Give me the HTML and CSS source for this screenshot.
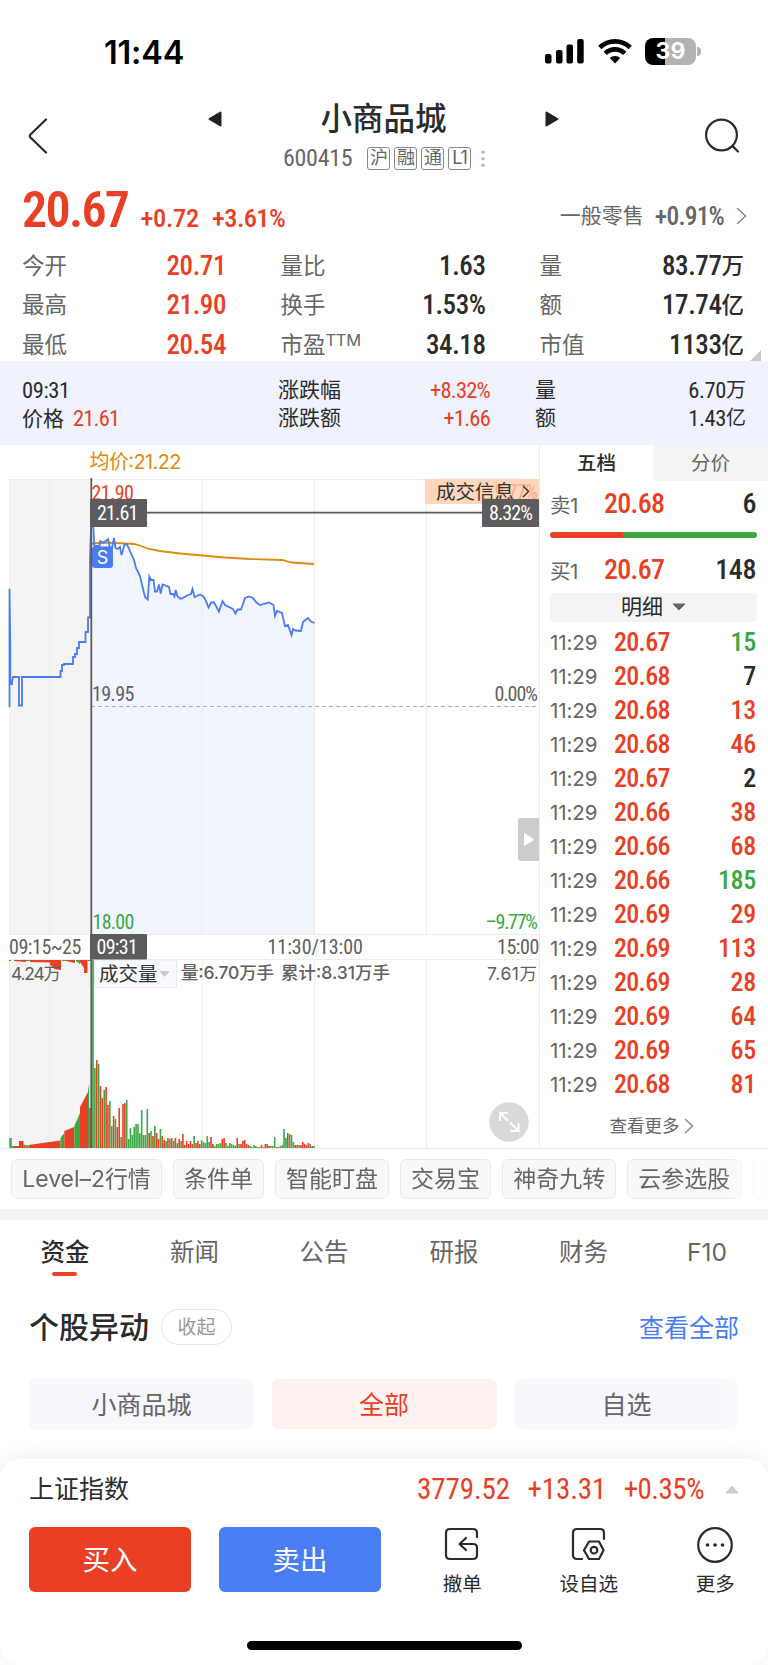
FILE: index.html
```
<!doctype html>
<html lang="zh-CN">
<head>
<meta charset="UTF-8">
<meta name="viewport" content="width=device-width, initial-scale=1">
<title>小商品城 600415</title>
<link rel="stylesheet" href="styles.css">
</head>

<body>
<div class="statusbar">
<span class="clock">11:44</span>
<div class="status-icons">
<svg width="39" height="26" viewBox="0 0 39 26"><rect x="0" y="16" width="6.5" height="9.500" rx="2"/><rect x="11" y="12" width="6.500" height="13.500" rx="2"/><rect x="21.500" y="6.500" width="6.500" height="19" rx="2"/><rect x="32.200" y="1" width="6.500" height="24.500" rx="2"/></svg>
<svg width="34" height="26" viewBox="0 0 34 26"><g fill="none" stroke="#000" stroke-width="4.600"><path d="M1.800 9.500a22 22 0 0 1 30.400 0"/><path d="M7.300 15.300a14 14 0 0 1 19.400 0"/></g><path d="M17 25.500l-5.300-5.400a7.600 7.600 0 0 1 10.600 0z"/></svg>
<div class="battery"><span>39</span></div>
</div>
</div>

<div class="header">
<svg class="back" width="20" height="36" viewBox="0 0 20 36"><path d="M18 1.500L2.500 16.500q-1.500 1.500 0 3L18 34.500" fill="none" stroke="#2b2b2b" stroke-width="2.200" stroke-linecap="round"/></svg>
<div class="stock">
<div class="stock-name">
<svg width="14" height="16" viewBox="0 0 14 16"><path d="M12.500 1.500v13L1.500 8z" fill="#222" stroke="#222" stroke-width="2" stroke-linejoin="round"/></svg>
<h1>小商品城</h1>
<svg width="14" height="16" viewBox="0 0 14 16"><path d="M1.500 1.500v13L12.500 8z" fill="#222" stroke="#222" stroke-width="2" stroke-linejoin="round"/></svg>
</div>
<div class="stock-code"><span class="num">600415</span><b>沪</b><b>融</b><b>通</b><b>L1</b><i></i></div>
</div>
<svg class="search" width="36" height="36" viewBox="0 0 36 36"><g fill="none" stroke="#2b2b2b" stroke-width="2.200" stroke-linecap="round"><circle cx="17.500" cy="17" r="15.400"/><path d="M28.500 28l5.500 5.500"/></g></svg>
</div>

<div class="price num">
<span class="last">20.67</span><span class="chg">+0.72</span><span class="chg">+3.61%</span>
<span class="sector"><em>一般零售</em>+0.91%<svg width="11" height="18" viewBox="0 0 11 18"><path d="M1 1l8.500 8L1 17" fill="none" stroke="#888" stroke-width="1.500"/></svg></span>
</div>

<div class="quotes">
<span>今开</span><b class="num red">20.71</b><span>量比</span><b class="num">1.63</b><span>量</span><b class="num">83.77<u>万</u></b>
<span>最高</span><b class="num red">21.90</b><span>换手</span><b class="num">1.53%</b><span>额</span><b class="num">17.74<u>亿</u></b>
<span>最低</span><b class="num red">20.54</b><span>市盈<sup>TTM</sup></span><b class="num">34.18</b><span>市值</span><b class="num">1133<u>亿</u></b>
<svg class="fold" width="11" height="11" viewBox="0 0 11 11"><path d="M11 0v11H0z" fill="#c8c8c8"/></svg>
</div>

<div class="cross-info">
<span class="num">09:31</span><span>涨跌幅</span><b class="num red">+8.32%</b><span>量</span><b class="num">6.70<u>万</u></b>
<span>价格 <b class="num red">21.61</b></span><span>涨跌额</span><b class="num red">+1.66</b><span>额</span><b class="num">1.43<u>亿</u></b>
</div>

<div class="market">
<svg class="chart" width="540" height="704" viewBox="0 445 540 704">
<text class="avg" x="89.500" y="469" font-size="20" textLength="92">均价:21.22</text>
<rect x="9" y="479" width="82" height="455" fill="#f4f4f4"/>
<rect x="9" y="960" width="82" height="188" fill="#f4f4f4"/>
<path d="M91 934V512L93 520L94.300 546H99.500L100.300 541L103 543L108 539L110 548H112L114 538L115.500 548L117.500 549L120 547L121.500 555L124.500 544.500H127L134 560L136 568L140 576L145 597L147.700 599.500L149.300 576.500L151 580H153.500L155 591.500H157L159 584.500L160.700 593.500L162.500 584.500L169 587L170.500 594H173L174.500 596.500L175.700 590L177.500 596.500L181 599L188 595L191 594L192.500 589L194.500 597L200 594.500L203.500 596.500L206 601L208.500 607.500L211 602.500H214L219 611.500L222.500 601L225 605L233 609L235.500 613.500L237.500 609.500L241 609.500L245 598L249 596.500L253 598L256 602L260 605L269 602.500L273.500 605L275 616L277 611L282 613L285 626L288 625L291.500 635L293 629L295.500 630.500L301 631L303 622L308 618L311 621.500L314.500 623V934z" fill="#f0f5fe"/>
<g stroke="#ececec" stroke-width="1">
<path d="M9 479.500H540M9 934.500H540M9 959.500H540M0 1148.500H540"/>
<path d="M9.500 479V934M49.500 479V934M202 479V934M314.500 479V934M426.500 479V934M539.500 445V1148"/>
<path d="M9.500 960V1148M49.500 960V1148M202 960V1148M314.500 960V1148M426.500 960V1148"/>
</g>
<path d="M91 706.500H539" stroke="#aaa" stroke-dasharray="4 3"/>
<path d="M91 544.500L93 543.500L104 542.500L125 543.500L134 544L140 545.500L149 549L160 551L180 553.500L202 555.500L225 557.500L250 559L282 560L292 562.500L314 564" fill="none" stroke="#dc8c0e" stroke-width="1.800"/>
<path class="line" d="M9.500 707V589L10.300 645V684H12V682L13 677H19V705.500H22V677H60.500V671H62V665H64V664H73V657H75V654H77V648H79V642H85.500V632H88V617.500H90V560L91.500 512L93 520L94.300 546H99.500L100.300 541L103 543L108 539L110 548H112L114 538L115.500 548L117.500 549L120 547L121.500 555L124.500 544.500H127L134 560L136 568L140 576L145 597L147.700 599.500L149.300 576.500L151 580H153.500L155 591.500H157L159 584.500L160.700 593.500L162.500 584.500L169 587L170.500 594H173L174.500 596.500L175.700 590L177.500 596.500L181 599L188 595L191 594L192.500 589L194.500 597L200 594.500L203.500 596.500L206 601L208.500 607.500L211 602.500H214L219 611.500L222.500 601L225 605L233 609L235.500 613.500L237.500 609.500L241 609.500L245 598L249 596.500L253 598L256 602L260 605L269 602.500L273.500 605L275 616L277 611L282 613L285 626L288 625L291.500 635L293 629L295.500 630.500L301 631L303 622L308 618L311 621.500L314.500 623"/>
<g class="num">
<text class="up" x="91.500" y="499.500" textLength="42">21.90</text>
<text x="92" y="701" textLength="42">19.95</text>
<text class="down" x="92.500" y="928.500" textLength="41.500">18.00</text>
<text x="494.500" y="701" textLength="43">0.00%</text>
<text class="down" x="485.500" y="928.500" textLength="52">–9.77%</text>
<text x="9" y="954" textLength="72">09:15~25</text>
<text x="267.500" y="954" textLength="95">11:30/13:00</text>
<text x="497" y="954" textLength="42">15:00</text>
</g>
<rect x="92" y="546.500" width="21" height="21.500" rx="3" fill="#4a7cf2"/>
<text class="sell-mark" x="102.500" y="564" text-anchor="middle" font-size="18">S</text>
<rect x="425" y="479" width="114" height="25" rx="1" fill="#ffd7bc"/>
<text class="num faded" x="494.500" y="498.500" textLength="43">9.77%</text>
<text class="dark" x="436" y="498.500" font-size="19.500">成交信息</text>
<path d="M523 486l5.500 5.500-5.500 5.500" fill="none" stroke="#333" stroke-width="1.400"/>

<g id="volume"></g>
<text x="11" y="980" font-size="17.500" textLength="50">4.24万</text>
<rect x="94.500" y="960" width="82" height="27.500" fill="#f7f9ff" stroke="#e9ebf1"/>
<text class="dark" x="99" y="981" font-size="19.500">成交量</text>
<path d="M160 971.500h9l-4.500 5z" fill="#ccc" stroke="#ccc"/>
<text x="181" y="979" font-size="17.500" textLength="93" font-weight="500">量:6.70万手</text>
<text x="281" y="979" font-size="17.500" textLength="109" font-weight="500">累计:8.31万手</text>
<text x="487" y="980" font-size="17.500" textLength="50">7.61万</text>

<path d="M91.300 478V1148" stroke="#5c5c5c" stroke-width="1.800"/>
<path d="M91 512.700H539" stroke="#5c5c5c" stroke-width="1.800"/>
<g fill="#5c5c5c"><rect x="90" y="499" width="57" height="28" rx="1"/><rect x="482" y="499" width="57" height="28" rx="1"/><rect x="90" y="934" width="57" height="25.500" rx="1"/></g>
<g class="tag num">
<text x="97" y="520" textLength="41">21.61</text>
<text x="489" y="520" textLength="43.500">8.32%</text>
<text x="96.500" y="954" textLength="41">09:31</text>
</g>
<path d="M539 818h-18q-3 0-3 3v37q0 3 3 3h18z" fill="#ccc"/>
<path d="M524.500 833.500v12l9.500-6z" fill="#fff" stroke="#fff" stroke-linejoin="round"/>
<circle cx="509" cy="1122" r="19.700" fill="#d9d9d9"/>
<path d="M500 1121v-8h8M500 1113l8 8M518.500 1123v8h-8M518.500 1131l-8.500-8.500" fill="none" stroke="#fff" stroke-width="2"/>
</svg>

<div class="book">
<div class="book-tabs"><b>五档</b><span>分价</span></div>
<div class="level num"><span>卖1</span><b class="red">20.68</b><b>6</b></div>
<div class="ratio"></div>
<div class="level num"><span>买1</span><b class="red">20.67</b><b>148</b></div>
<div class="detail">明细<svg width="14" height="8" viewBox="0 0 14 8"><path d="M1 1h12L7 7z" fill="#666" stroke="#666" stroke-linejoin="round"/></svg></div>
<div class="ticks" id="ticks"></div>
<div class="more">查看更多<svg width="10" height="16" viewBox="0 0 10 16"><path d="M1 1l7.500 7L1 15" fill="none" stroke="#888" stroke-width="1.400"/></svg></div>
</div>
</div>

<div class="chips"><span>Level–2行情</span><span>条件单</span><span>智能盯盘</span><span>交易宝</span><span>神奇九转</span><span>云参选股</span><span></span></div>

<div class="tabs"><b>资金</b><span>新闻</span><span>公告</span><span>研报</span><span>财务</span><span>F10</span></div>

<div class="moves-head"><h2>个股异动</h2><span class="collapse">收起</span><span class="all">查看全部</span></div>
<div class="moves-tabs"><span>小商品城</span><span class="on">全部</span><span>自选</span></div>

<div class="footer">
<div class="index"><span>上证指数</span><b class="num">3779.52</b><b class="num">+13.31</b><b class="num">+0.35%</b><svg width="14" height="9" viewBox="0 0 14 9"><path d="M1 8h12L7 1z" fill="#ccc" stroke="#ccc" stroke-linejoin="round"/></svg></div>
<div class="actions">
<div class="btn buy">买入</div>
<div class="btn sell">卖出</div>
<div class="act"><svg width="36" height="36" viewBox="0 0 36 36"><path d="M33 10V6q0-4-4-4H6Q2 2 2 6v22q0 4 4 4h23q4 0 4-4v-7q0-4-4-4H16M22 11l-6.500 6 6.500 6"/></svg>撤单</div>
<div class="act"><svg width="36" height="36" viewBox="0 0 36 36"><path d="M33 12V6q0-4-4-4H6Q2 2 2 6v22q0 4 4 4h5M18 14.500h10l4.500 8.700-4.500 8.800H18l-5-8.800z"/><circle cx="23" cy="23.200" r="3.300"/></svg>设自选</div>
<div class="act"><svg width="36" height="36" viewBox="0 0 36 36"><circle cx="18" cy="18" r="16.800"/><path d="M10.500 18h.1M18 18h.1M25.500 18h.1" stroke-width="3.600"/></svg>更多</div>
</div>
<div class="home"></div>
</div>

<script>
const RED = '#e93f24';
const GREEN = '#3aa843';

// minute volume, one letter + bar height each
const volume = 'g188 g80 r88 g84 r62 r50 g58 r61 r43 g47 g22 r32 g29 r21 r40 g11 r44 r45 g48 g9 g20 g13 g21 g24 g24 g15 g38 g13 g13 g39 ' +
	'r15 g17 r12 g22 r15 r9 g19 r12 r8 g7 r10 g9 r10 g7 r10 g5 r9 g7 r14 r3 r7 r4 r7 r4 g12 r5 r7 r4 g8 g6 ' +
	'g5 g12 g6 r11 r4 g2 g4 g4 g5 r9 r10 g5 g2 g5 g4 g3 g2 r10 g4 r4 r7 r8 r4 r3 g2 g1 g3 g2 g1 g1 ' +
	'r3 g1 r4 r4 r2 g2 g2 g11 r1 r1 g2 g3 g19 g10 r15 g14 g13 g6 r3 r3 g3 r3 r6 r4 r3 r5 g4 r2 g2';
// call auction blocks: x, width, height left, height right
const auction = [
	[9.3, 2.4, 10, 10, GREEN], [11.7, 1.2, 2, 2, GREEN], [13, 6, 2, 2, RED], [19, 4.5, 7, 7, RED], [23.5, 2, 3, 3, RED],
	[25.5, 3, 3, 2.5, GREEN], [28.5, 32, 3, 7.5, RED], [60.5, 3.8, 10, 15, GREEN], [64.3, 10, 17, 21, RED],
	[74.3, 5.7, 22, 35, GREEN], [80, 8, 41, 56, RED], [88, 1.2, 57, 65, GREEN], [89.2, 1.8, 40, 40, RED]
];
const unmatched = [
	[9, 2, 1, 1, GREEN], [14, 12, 1, 2, RED], [26, 4, 1, 1, GREEN], [30, 20, 2, 2.5, RED], [50, 4, 5, 8, RED], [54, 7, 9, 10, RED],
	[62, 4, 1, 1, GREEN], [66, 9, 1, 3, RED], [76, 4, 1, 4, GREEN], [80, 4, 2, 8, RED], [84, 3.5, 13, 13, RED], [87.5, 3, 1, 1, GREEN]
];
const ticks = [
	['20.67', 15, 'green'], ['20.68', 7, ''], ['20.68', 13, 'red'], ['20.68', 46, 'red'], ['20.67', 2, ''],
	['20.66', 38, 'red'], ['20.66', 68, 'red'], ['20.66', 185, 'green'], ['20.69', 29, 'red'], ['20.69', 113, 'red'],
	['20.69', 28, 'red'], ['20.69', 64, 'red'], ['20.69', 65, 'red'], ['20.68', 81, 'red']
];

let bars = '';
volume.split(' ').forEach(function(v, i) {
	const h = Number(v.slice(1));
	bars += `<rect x="${(92.2 + i * 1.873).toFixed(2)}" y="${1148 - h}" width="1.6" height="${h}" fill="${v[0] == 'r' ? RED : GREEN}"/>`;
});
auction.forEach(function([x, w, a, b, c]) {
	bars += `<path d="M${x} 1148v${-a}L${x + w} ${1148 - b}V1148z" fill="${c}"/>`;
});
unmatched.forEach(function([x, w, a, b, c]) {
	bars += `<path d="M${x} 960v${a}L${x + w} ${960 + b}V960z" fill="${c}"/>`;
});
document.getElementById('volume').innerHTML = bars;

document.getElementById('ticks').innerHTML = ticks.map(function([price, vol, cls]) {
	return `<div class="tick"><span>11:29</span><b class="num red">${price}</b><b class="num ${cls}">${vol}</b></div>`;
}).join('');
</script>
</body>
</html>
```
FILE: styles.css
```
*{box-sizing:border-box;}
body{margin:0; width:768px; height:1665px; overflow:hidden; background:#fff; color:#2b2b2b; font-family:Inter, "Noto Sans CJK SC", sans-serif; font-size:22px; display:flex; flex-direction:column;}
h1, h2{margin:0; font-weight:500;}
b, h2{font-weight:500;}
em, i{font-style:normal;}
u{text-decoration:none; font-size:22.500px; position:relative; top:-1px; letter-spacing:0;}
svg{display:block; flex:none;}
.num{font-family:"Roboto Condensed", Roboto, "Noto Sans CJK SC", sans-serif; font-stretch:75%; letter-spacing:-.4px;}
.red{color:#e93f24;}
.green{color:#3aa843;}

.statusbar{height:104px; flex:none; display:flex; justify-content:space-between; padding:0 72px 0 104px;}
.clock{font-size:32.500px; font-weight:600; line-height:38px; margin-top:34px; color:#000; letter-spacing:-.2px;}
.status-icons{display:flex; gap:13.500px; height:28px; margin-top:38px;}
.battery{position:relative; width:51px; height:27px; border-radius:8px; background:linear-gradient(90deg, #000 39%, #b3b3b3 39%); color:#fff; font-size:23px; font-weight:700; line-height:27px; text-align:center;}
.battery::after{content:""; position:absolute; right:-5px; top:9px; width:4px; height:9px; background:#b3b3b3; border-radius:0 4px 4px 0;}

.header{height:80px; flex:none; display:flex; padding:0 28px 0 28px;}
.back{margin-top:14px;}
.search{margin:14px 0 0 auto;}
.stock{width:351px; margin-left:160px;}
.stock-name{display:flex; justify-content:space-between; align-items:center; height:30px;}
.stock-name h1{font-size:31.500px; line-height:30px;}
.stock-code{display:flex; align-items:center; height:24px; margin:12px 0 0 75px; color:#666;}
.stock-code .num{width:84px; font-size:24px; letter-spacing:-.3px;}
.stock-code b{width:23px; height:23px; margin-right:4px; border:1.5px solid #888; border-radius:3px; font-size:18px; font-weight:400; line-height:20px; text-align:center; letter-spacing:-1px;}
.stock-code i{width:4px; height:18px; margin-left:6px; background:radial-gradient(circle, #bbb 1.6px, transparent 2px) 0 0/4px 6.500px;}

.price{height:56px; flex:none; display:flex; align-items:baseline; padding:0 21px 0 22px; color:#e93f24; line-height:50px; font-weight:500;}
.last{width:118.500px; font-size:50px; font-weight:600; letter-spacing:-1.700px; line-height:52px;}
.chg{width:71.500px; font-size:26.500px; letter-spacing:-.300px;}
.chg + .chg{letter-spacing:-.600px;}
.sector{margin-left:auto; display:flex; align-items:center; align-self:flex-start; margin-top:19px; font-size:25.500px; line-height:26px; color:#666; letter-spacing:-.800px;}
.sector em{font-size:21px; font-weight:400; letter-spacing:0; margin-right:11px;}
.sector svg{margin-left:12px;}

.quotes{position:relative; height:121px; flex:none; display:grid; grid-template-columns:144.500px 114px 60px 145px 114px 144.500px; grid-template-rows:repeat(3, 39.500px); padding:5.500px 24px 0 22px; line-height:40px; color:#666;}
.quotes span{font-size:22.500px; white-space:nowrap;}
.quotes span:nth-child(6n+5){padding-left:54px;}
.quotes b{font-size:27px; color:#2b2b2b; text-align:right;}
.quotes b.red{color:#e93f24; text-align:left;}
.quotes sup{font-size:16.500px; line-height:0; vertical-align:7px; letter-spacing:-.300px;}
.fold{position:absolute; right:7px; bottom:0;}

.cross-info{height:84px; flex:none; display:grid; grid-template-columns:256px 127px 85px 90px 166px; padding:14.500px 22px 0; grid-auto-rows:28px; line-height:28px; background:#f0f2fe; font-size:21px;}
.cross-info .num{font-size:22.500px; font-weight:400;}
.cross-info .red{letter-spacing:-.8px;}
.cross-info span b{margin-left:3px;}
.cross-info > b{text-align:right;}
.cross-info > span:nth-child(5n+4){padding-left:45px;}
.cross-info u{font-size:20px;}

.market{height:704px; flex:none; display:flex;}
.chart text{fill:#606060; font-family:Inter, "Noto Sans CJK SC", sans-serif;}
.chart .num text, .chart text.num{font-family:"Roboto Condensed", Roboto, sans-serif; font-stretch:75%; font-size:20px;}
.chart .avg{fill:#dc8c0e;}
.chart .up{fill:#e93f24;}
.chart .down{fill:#3aa843;}
.chart .dark{fill:#333;}
.chart .faded{fill:#ffa88c;}
.chart .sell-mark, .chart .tag text{fill:#fff;}
.line{fill:none; stroke:#4a7cf2; stroke-width:1.8;}

.book{width:228px; display:flex; flex-direction:column; border-bottom:1px solid #ececec;}
.book-tabs{display:flex; height:36px; line-height:36px; text-align:center; font-size:19.500px;}
.book-tabs b{width:113px;}
.book-tabs span{flex:1; background:#f4f4f4; color:#666;}
.level{display:flex; align-items:center; height:45px; padding:0 12px 0 10px; font-size:28px;}
.level span{width:54px; font-size:20.500px; font-family:Inter, "Noto Sans CJK SC", sans-serif; color:#666;}
.level b.red{letter-spacing:-.7px;}
.level b:last-child{margin-left:auto;}
.ratio{height:6px; margin:6px 11px 9px 10px; border-radius:3px; background:linear-gradient(90deg, #e93f24 35.300%, #3aa843 35.300%);}
.detail{display:flex; align-items:center; justify-content:center; gap:9px; height:29px; line-height:25px; padding-bottom:3px; margin:1px 11px 0 10px; border-radius:4px; background:#f4f4f4; font-size:21px;}
.detail svg{margin-top:2px;}
.ticks{padding-top:3px;}
.tick{display:flex; align-items:center; height:33.970px; padding:0 12px 0 10px;}
.tick span{width:64px; font-size:20.500px; color:#666; padding-top:2px; letter-spacing:-.1px;}
.tick .num{font-size:26px; letter-spacing:-.7px;}
.tick b:last-child{margin-left:auto; letter-spacing:-.3px;}
.more{display:flex; align-items:center; justify-content:center; gap:4px; margin:14px 5px 0 0; line-height:22px; font-size:17.500px; color:#666;}

.chips{height:60px; flex:none; display:flex; gap:10.500px; padding:10px 0 0 11px; overflow:hidden; -webkit-mask-image:linear-gradient(90deg, #000 94%, transparent);}
.chips span{height:40px; flex:none; padding:0 10.300px; border:1px solid #e9e9e9; border-radius:6px; background:#f8f8f8; color:#666; font-size:23px; line-height:39px; white-space:nowrap;}
.chips span:last-child{width:60px;}
.chips span:first-child{letter-spacing:-.05px;}

.tabs{height:82px; flex:none; display:grid; grid-template-columns:130px 129px 130px 130px 129px 118px; border-top:11px solid #f4f4f4; font-size:24.500px; line-height:65px; text-align:center; color:#666;}
.tabs b{position:relative; color:#2b2b2b;}
.tabs b::after{content:""; position:absolute; left:52px; top:52px; width:25px; height:4px; border-radius:2px; background:#e93f24;}

.moves-head{height:88px; flex:none; display:flex; align-items:center; padding:0 29px; margin-top:-8px;}
.moves-head h2{font-size:30px; line-height:40px; margin-top:-1px;}
.collapse{width:71px; height:36px; margin-left:12px; border:1px solid #e5e5e5; border-radius:18px; color:#999; font-size:19px; line-height:35px; text-align:center;}
.all{margin:-2px 0 0 auto; font-size:25px; color:#4a7cf2;}
.moves-tabs{display:grid; grid-template-columns:repeat(3, 225px); column-gap:17.500px; padding:8px 29px 0; flex:none;}
.moves-tabs span{height:50px; border-radius:6px; background:#f7f7fc; color:#666; font-size:25px; line-height:52px; text-align:center;}
.moves-tabs .on{background:#fef2f0; color:#e93f24;}
.moves-tabs span:last-child{background:linear-gradient(90deg, #f7f7fc 92%, #fcfcfe);}

.footer{flex:none; height:206px; margin-top:auto; border-radius:20px; background:#fff; box-shadow:0 -2px 24px rgba(0,0,0,.07);}
.index{display:flex; align-items:center; height:60px; line-height:56px; padding:0 29px; font-size:25px;}
.index .num{margin-left:17.500px; font-size:29px; font-weight:400; color:#e93f24; letter-spacing:-.1px;}
.index .num:nth-child(4){letter-spacing:-.500px;}
.index span{margin:-1px auto 0 0;}
.index svg{margin-left:21px;}
.actions{display:flex; height:66px; margin-top:8px; padding-left:29px;}
.btn{flex:none; width:162px; height:65px; margin-right:28px; border-radius:6px; background:#e93f24; color:#fff; font-size:27.500px; line-height:66px; text-align:center;}
.sell{background:#4a7cf2; margin-right:18px;}
.act{flex:none; width:126.500px; display:flex; flex-direction:column; align-items:center; font-size:19.500px; line-height:28px; gap:7px;}
.act svg{fill:none; stroke:#2b2b2b; stroke-width:2.2; stroke-linecap:round; stroke-linejoin:round;}
.home{width:275px; height:9px; margin:48px auto 0; border-radius:5px; background:#000;}
```
